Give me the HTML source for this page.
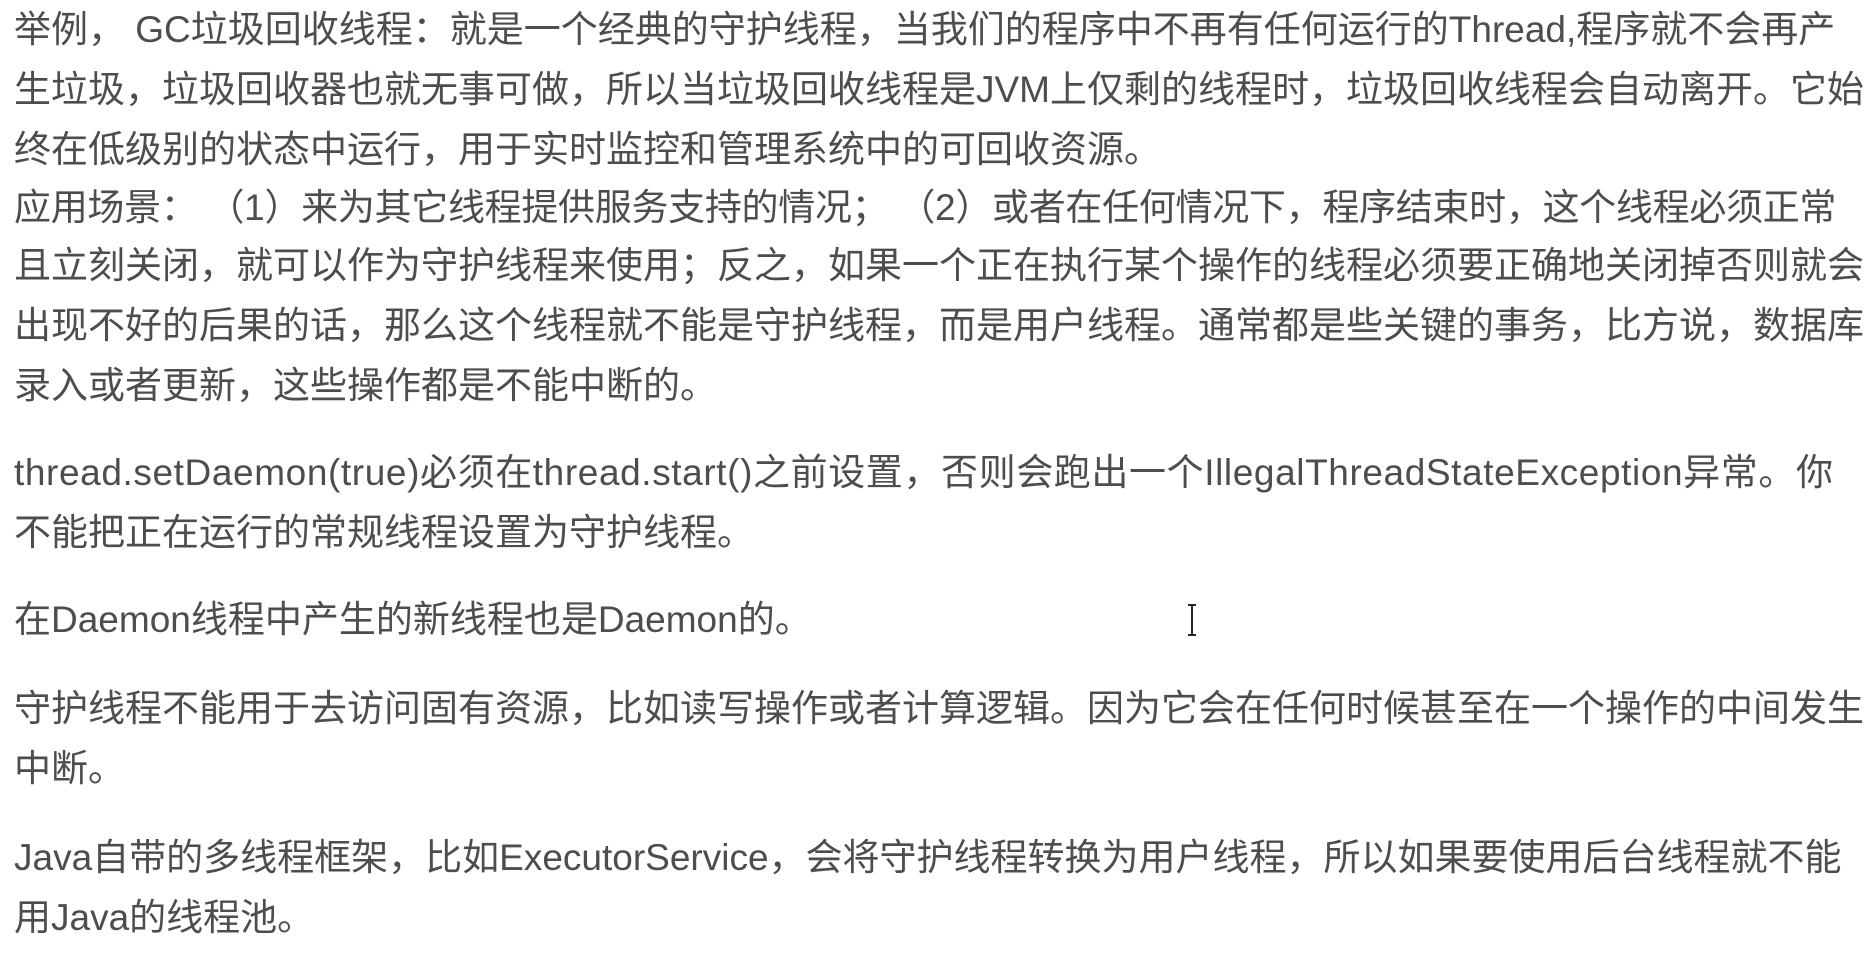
<!DOCTYPE html>
<html><head><meta charset="utf-8"><style>
html,body{margin:0;padding:0;background:#fff;width:1875px;height:958px;overflow:hidden}
.l{position:absolute;left:14px;white-space:nowrap;font-family:"Liberation Sans","Noto Sans CJK SC",sans-serif;font-size:37px;color:#4d4d4d;line-height:40px}
</style></head><body>
<div class="l" style="top:10px">举例， GC垃圾回收线程：就是一个经典的守护线程，当我们的程序中不再有任何运行的Thread,程序就不会再产</div>
<div class="l" style="top:70px">生垃圾，垃圾回收器也就无事可做，所以当垃圾回收线程是JVM上仅剩的线程时，垃圾回收线程会自动离开。它始</div>
<div class="l" style="top:130px">终在低级别的状态中运行，用于实时监控和管理系统中的可回收资源。</div>
<div class="l" style="top:188px;letter-spacing:-0.3px">应用场景： （1）来为其它线程提供服务支持的情况； （2）或者在任何情况下，程序结束时，这个线程必须正常</div>
<div class="l" style="top:246px">且立刻关闭，就可以作为守护线程来使用；反之，如果一个正在执行某个操作的线程必须要正确地关闭掉否则就会</div>
<div class="l" style="top:306px">出现不好的后果的话，那么这个线程就不能是守护线程，而是用户线程。通常都是些关键的事务，比方说，数据库</div>
<div class="l" style="top:366px">录入或者更新，这些操作都是不能中断的。</div>
<div class="l" style="top:453px;letter-spacing:0.6px">thread.setDaemon(true)必须在thread.start()之前设置，否则会跑出一个IllegalThreadStateException异常。你</div>
<div class="l" style="top:513px">不能把正在运行的常规线程设置为守护线程。</div>
<div class="l" style="top:600px">在Daemon线程中产生的新线程也是Daemon的。</div>
<div class="l" style="top:689px">守护线程不能用于去访问固有资源，比如读写操作或者计算逻辑。因为它会在任何时候甚至在一个操作的中间发生</div>
<div class="l" style="top:749px">中断。</div>
<div class="l" style="top:838px">Java自带的多线程框架，比如ExecutorService，会将守护线程转换为用户线程，所以如果要使用后台线程就不能</div>
<div class="l" style="top:898px">用Java的线程池。</div>
<svg style="position:absolute;left:1186px;top:604px" width="12" height="32"><path d="M2 1h8M6 1v30M2 31h8" stroke="#222" stroke-width="2" fill="none"/></svg>
</body></html>
